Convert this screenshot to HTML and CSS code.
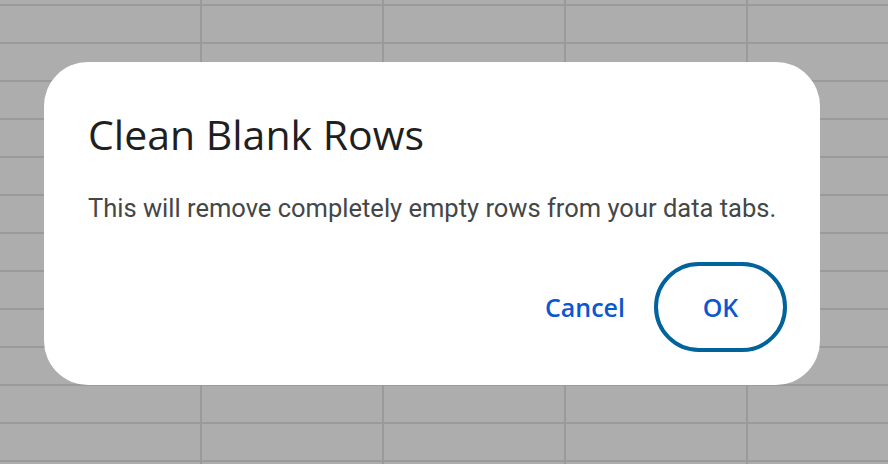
FILE: index.html
```html
<!DOCTYPE html>
<html>
<head>
    <title>Clean Blank Rows</title>
    <link rel="stylesheet" href="styles.css">
</head>
<body>
    <div class="sheet">
        <div class="cols"></div>
    </div>

    <div class="scrim">
        <div class="dialog" role="dialog">
            <h1 class="title">Clean Blank Rows</h1>
            <p class="text">This will remove completely empty rows from your data tabs.</p>
            <div class="actions">
                <button class="btn btn-text">Cancel</button>
                <button class="btn btn-ok">OK</button>
            </div>
        </div>
    </div>
</body>
</html>
```

FILE: styles.css
```css
html, body { margin: 0; height: 100%; overflow: hidden; }
body { font-family: Roboto, "Liberation Sans", Arial, sans-serif; background: #adadad; }

/* spreadsheet behind the scrim */
.sheet { height: 100%; background-image: linear-gradient(to bottom, #9a9a9a 2px, transparent 2px); background-size: 100% 38px; background-position: 0 4px; }
.cols { height: 100%; margin-left: 200px; background-image: linear-gradient(to right, #9a9a9a 2px, transparent 2px); background-size: 182px 100%; }

.scrim { position: fixed; inset: 0; padding: 62px 0 0 44px; }
.dialog { width: 776px; height: 323px; box-sizing: border-box; padding: 48px 33px 33px 44px; background: #fff; border-radius: 44px; display: flex; flex-direction: column; }
.title { margin: 0; font-family: "Open Sans", Roboto, sans-serif; font-size: 41px; font-weight: 400; line-height: 48px; color: #1f1f1f; }
.text { margin: 35px 0 0; font-size: 25.5px; line-height: 30px; color: #444746; }

.actions { margin-top: auto; display: flex; justify-content: flex-end; align-items: center; }
.btn { font-family: "Open Sans", Roboto, sans-serif; font-size: 25px; font-weight: 600; color: #0b57d0; background: none; border: none; cursor: pointer; }
.btn-text { padding: 0; margin-right: 29px; }
.btn-ok { width: 133px; height: 90px; border: 4.5px solid #00639b; border-radius: 45px; padding: 0; }
```
